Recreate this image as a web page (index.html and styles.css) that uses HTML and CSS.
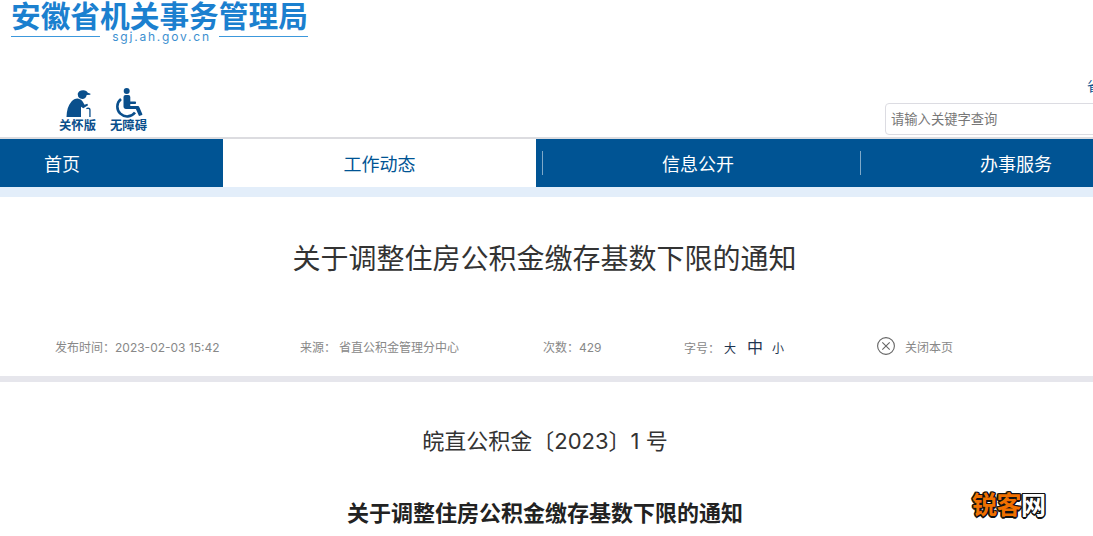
FILE: index.html
```html
<!DOCTYPE html>
<html lang="zh-CN">
<head>
    <meta charset="UTF-8">
    <title>关于调整住房公积金缴存基数下限的通知</title>
    <link rel="stylesheet" href="styles.css">
</head>
<body>
    <div class="header">
        <div class="logo">
            <div class="logo-name">安徽省机关事务管理局</div>
            <div class="logo-sub"><span class="logo-line"></span><span class="logo-url">sgj.ah.gov.cn</span><span class="logo-line"></span></div>
        </div>
        <div class="header-tools">
            <div class="care-links">
                <a class="care-link">
                    <svg width="30" height="30" viewBox="0 0 30 30" fill="#0a4f8c">
                        <path d="M14.500 6.500C15 3.500 17.500 2 20.500 2.200c2 .1 3.600 1.200 4.300 2.500l2.700 1-.2 1-3.600.2c-.4 2.400-2.200 4-4.400 4-2.600 0-4.800-2-4.300-4.400z"/>
                        <path d="M3.500 29c.2-6.500 1.500-11.500 5-15.500 2-2.200 4.500-3.200 7-2.800 2 .3 3.400 1.500 4.300 3l1.700 3.100 2.800-1 .8 1.500-4.800 3-2.300-1.500V29z"/>
                        <path d="M23 20.200c1.500-1.400 4.600-1 4.600 1.500V29h-1.300v-7c0-1.300-1.700-1.300-2.500-.7z"/>
                    </svg>
                    <span>关怀版</span>
                </a>
                <a class="care-link">
                    <svg width="30" height="30" viewBox="0 0 30 30" fill="#0a4f8c">
                        <circle cx="12.700" cy="3" r="3"/>
                        <path d="M9.500 9a2 2 0 0 1 2-2h2.800a2 2 0 0 1 2 2v4.500h4.500c.8 0 1.300.5 1.300 1.200s-.5 1.300-1.300 1.300h-4.500v2h7.200c1 0 1.600.5 2 1.400l3 7-1 .9-2.500.6-3.100-6.900H12c-1.500 0-2.500-1-2.500-2.500z"/>
                        <path d="M7 11A9.800 9.800 0 1 0 21 24.500" fill="none" stroke="#0a4f8c" stroke-width="2.600"/>
                    </svg>
                    <span>无障碍</span>
                </a>
            </div>
            <div class="top-right">
                <div class="region">省</div>
                <input class="search" type="text" placeholder="请输入关键字查询">
            </div>
        </div>
    </div>

    <div class="nav">
        <a class="nav-item nav-home">首页</a>
        <a class="nav-item nav-work active">工作动态</a>
        <a class="nav-item nav-info">信息公开</a>
        <a class="nav-item nav-service">办事服务</a>
    </div>
    <div class="nav-band"></div>

    <h1 class="title">关于调整住房公积金缴存基数下限的通知</h1>

    <div class="meta">
        <span class="meta-time">发布时间：2023-02-03 15:42</span>
        <span class="meta-source">来源：<span class="source-name">省直公积金管理分中心</span></span>
        <span class="meta-count">次数：429</span>
        <span class="meta-size">字号：<span class="size-l">大</span><span class="size-m">中</span><span class="size-s">小</span></span>
        <span class="meta-close">
            <svg width="18" height="18" viewBox="0 0 18 18" fill="none" stroke="#666" stroke-width="1.100">
                <circle cx="9" cy="9" r="8.400"/>
                <path d="M5.300 5.300l7.400 7.400M12.700 5.300l-7.400 7.400"/>
            </svg>
            关闭本页
        </span>
    </div>

    <div class="article">
        <p class="doc-no">皖直公积金〔2023〕1 号</p>
        <p class="doc-title">关于调整住房公积金缴存基数下限的通知</p>
    </div>

    <div class="watermark">锐客<span class="watermark-end">网</span></div>
</body>
</html>
```

FILE: styles.css
```css
html, body {
    height: 536px;
    overflow: hidden;
}
body {
    margin: 0;
    width: 1093px;
    position: relative;
    background-color: #ffffff;
    color: #333333;
    font-family: Inter, "Noto Sans CJK SC", sans-serif;
}

/* Header */
.header {
    height: 137px;
    border-bottom: 2px solid #dcdce0;
    display: flex;
    flex-direction: column;
}
.logo {
    width: 297px;
    margin-left: 11px;
}
.logo-name {
    height: 31px;
    font-family: "Liberation Sans", "Noto Sans CJK SC", sans-serif;
    font-size: 29.700px;
    line-height: 34px;
    font-weight: 700;
    color: #1b80cf;
    white-space: nowrap;
}
.logo-sub {
    display: flex;
    align-items: center;
    height: 11px;
}
.logo-line {
    flex: 1;
    height: 1px;
    background-color: #3c98dc;
}
.logo-url {
    padding: 0 8px 0 12px;
    font-size: 12px;
    line-height: 10px;
    letter-spacing: 1.800px;
    color: #3c8fd0;
}
.header-tools {
    display: flex;
    justify-content: space-between;
    margin-top: 43px;
}
.care-links {
    display: flex;
    gap: 14px;
    margin-top: 3px;
    margin-left: 59px;
}
.care-link {
    width: 37px;
    display: flex;
    flex-direction: column;
    align-items: center;
    font-size: 12.300px;
    line-height: 14px;
    font-weight: 700;
    color: #0a4f8c;
    white-space: nowrap;
}
.care-link svg {
    display: block;
    margin-bottom: 1px;
}
.top-right {
    width: 208px;
    margin-top: -11px;
}
.region {
    height: 29px;
    padding-left: 202px;
    font-size: 14px;
    line-height: 24px;
    color: #0a4f8c;
    overflow: hidden;
    white-space: nowrap;
}
.search {
    display: block;
    width: 240px;
    height: 32px;
    margin: 0;
    padding: 0 5px;
    box-sizing: border-box;
    border: 1px solid #dcdce2;
    border-radius: 4px;
    background-color: #ffffff;
    font-family: inherit;
    font-size: 13.300px;
    outline: none;
}
.search::placeholder {
    color: #777777;
}

/* Nav */
.nav {
    display: flex;
    height: 48px;
    background-color: #005494;
    font-size: 18px;
    color: #ffffff;
}
.nav-item {
    display: flex;
    align-items: center;
    justify-content: center;
    flex-shrink: 0;
    padding-bottom: 1px;
    box-sizing: border-box;
    white-space: nowrap;
    position: relative;
}
.nav-home {
    width: 223px;
    padding-right: 99px;
}
.nav-work {
    width: 313px;
}
.nav-info {
    width: 324px;
}
.nav-service {
    width: 233px;
    padding-left: 120px;
    justify-content: flex-start;
}
.nav-item.active {
    background-color: #ffffff;
    color: #005494;
}
.nav-info::before, .nav-service::before {
    content: "";
    position: absolute;
    left: 6px;
    top: 12px;
    height: 24px;
    width: 1px;
    background-color: #7fa9c9;
}
.nav-service::before {
    left: 0;
}
.nav-band {
    height: 10px;
    background-color: #e3eefa;
}

/* Article head */
.title {
    margin: 45px 0 0;
    height: 34px;
    padding-right: 4px;
    font-size: 28px;
    line-height: 34px;
    font-weight: 400;
    text-align: center;
    color: #333333;
}
.meta {
    display: grid;
    grid-template-columns: 245px 243px 141px 193px auto;
    align-items: center;
    height: 34px;
    margin-top: 53px;
    padding-left: 55px;
    padding-bottom: 13px;
    font-size: 12px;
    color: #888888;
    border-bottom: 6px solid #e6e6ec;
}
.source-name {
    margin-left: 3px;
}
.size-l, .size-m, .size-s {
    color: #1f3550;
}
.size-l {
    margin-left: 4px;
}
.size-m {
    margin-left: 11px;
    font-size: 16px;
}
.size-s {
    margin-left: 9px;
}
.meta-close {
    display: flex;
    align-items: center;
    gap: 10px;
}

/* Article body */
.article {
    text-align: center;
}
.doc-no {
    margin: 45px 0 0;
    padding-right: 3px;
    font-size: 22px;
    line-height: 28px;
}
.doc-title {
    margin: 44px 0 0;
    padding-right: 3px;
    font-size: 22px;
    line-height: 28px;
    font-weight: 700;
    color: #222222;
}

/* Sits over the page corner */
.watermark {
    position: absolute;
    left: 972px;
    top: 490px;
    font-size: 25px;
    line-height: 30px;
    letter-spacing: -0.500px;
    font-weight: 700;
    color: #f07000;
    text-shadow: -1.500px 0 0 #111, 1.500px 0 0 #111, 0 -1.500px 0 #111, 0 1.500px 0 #111, -1px -1px 0 #111, 1px 1px 0 #111, -1px 1px 0 #111, 1px -1px 0 #111;
}
.watermark-end {
    color: #ffffff;
}
```
